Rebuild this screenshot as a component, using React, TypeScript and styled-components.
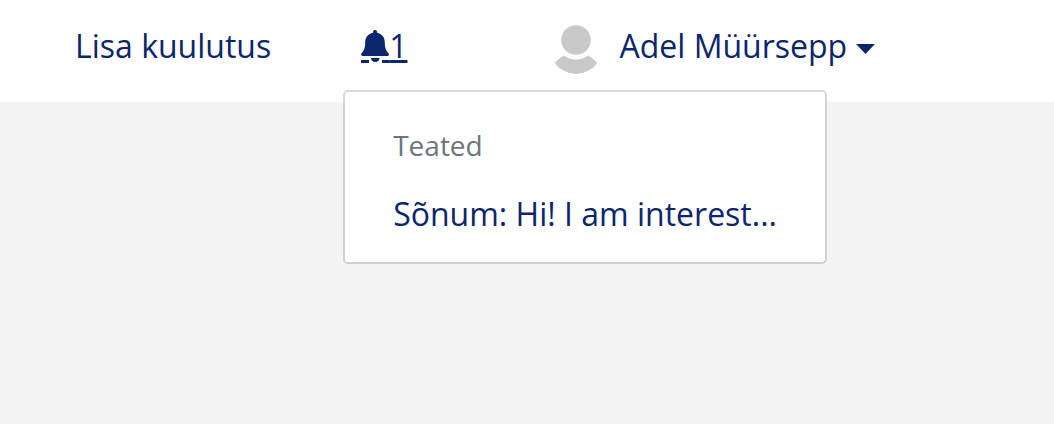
import React from "react";
import styled, { createGlobalStyle } from "styled-components";

const navy = "#0c266d";

const GlobalStyle = createGlobalStyle`
  body {
    margin: 0;
    font-family: "Open Sans", sans-serif;
    font-size: 32px;
    line-height: 48px;
    color: ${navy};
  }
`;

const Page = styled.div`
  min-height: 100vh;
  background: #f4f4f4;
`;

const Header = styled.header`
  background: #fff;
  padding: 22px 75px 32px;
`;

const Nav = styled.nav`
  display: flex;
  align-items: center;
  height: 48px;
  white-space: nowrap;
`;

const NavLink = styled.a`
  color: ${navy};
  text-decoration: none;
`;

const Notifications = styled.div`
  position: relative;
  margin-left: 90px;
`;

const PlainButton = styled.button`
  display: flex;
  align-items: center;
  padding: 0;
  border: 0;
  background: none;
  color: inherit;
  font: inherit;
  cursor: pointer;
`;

const Count = styled.span`
  text-decoration: underline;
  text-decoration-thickness: 3px;
  text-underline-offset: 2px;
`;

const UserButton = styled(PlainButton)`
  margin-left: 147px;
`;

const UserName = styled.span`
  margin: 0 9px 0 21px;
`;

const Menu = styled.section`
  position: absolute;
  top: 68px;
  left: -18px;
  box-sizing: border-box;
  width: 484px;
  padding: 32px 48px 24px;
  background: #fff;
  background-clip: padding-box;
  border: 2px solid rgba(0, 0, 0, 0.15);
  border-radius: 5px;
`;

const MenuTitle = styled.h2`
  margin: 0 0 24px;
  font-size: 28px;
  font-weight: 400;
  line-height: 42px;
  color: #6c757d;
`;

const MenuLink = styled(NavLink)`
  display: block;
`;

function BellIcon() {
  return (
    <svg width="28" height="48" viewBox="0 0 28 48" fill="currentColor" aria-hidden="true">
      <path d="M14 8c-1.200 0-2 .9-2 2v.800C7.200 11.700 4.200 15.500 4.200 20.300c0 5.800-1.200 8.300-3.300 10.500C.4 31.400.1 32 .1 32.500c0 .9.700 1.500 1.800 1.500h24.300c1.100 0 1.800-.6 1.800-1.500 0-.5-.3-1.100-.9-1.700-2.100-2.200-3.300-4.700-3.300-10.500 0-4.800-3-8.600-7.700-9.500V10c0-1.100-.8-2-2-2z" />
      <path d="M10 36h8.500c0 2.600-1.800 4-4.200 4S10 38.600 10 36z" />
      <path d="M0 38h8v3H0zM21 38h7v3h-7z" />
    </svg>
  );
}

function Avatar() {
  return (
    <svg width="44" height="58" viewBox="0 -8 44 58" fill="#c9c9c9" aria-hidden="true">
      <circle cx="22" cy="15" r="14.800" />
      <path d="M10 30.600A20 20 0 0 0 34 30.600C37.500 32.300 40.500 35 43.200 38.300A26.500 26.500 0 0 1 .8 38.300C3.500 35 6.500 32.300 10 30.600z" />
    </svg>
  );
}

function Caret() {
  return (
    <svg width="19" height="16" viewBox="0 -6 19 16" fill="currentColor" aria-hidden="true">
      <path d="M0 0h19l-9.500 10z" />
    </svg>
  );
}

export default function App() {
  return (
    <Page>
      <GlobalStyle />
      <Header>
        <Nav>
          <NavLink href="#new">Lisa kuulutus</NavLink>
          <Notifications>
            <PlainButton type="button" aria-expanded="true">
              <BellIcon />
              <Count>1</Count>
            </PlainButton>
            <Menu>
              <MenuTitle>Teated</MenuTitle>
              <MenuLink href="#message">Sõnum: Hi! I am interest...</MenuLink>
            </Menu>
          </Notifications>
          <UserButton type="button" aria-haspopup="menu">
            <Avatar />
            <UserName>Adel Müürsepp</UserName>
            <Caret />
          </UserButton>
        </Nav>
      </Header>
    </Page>
  );
}
